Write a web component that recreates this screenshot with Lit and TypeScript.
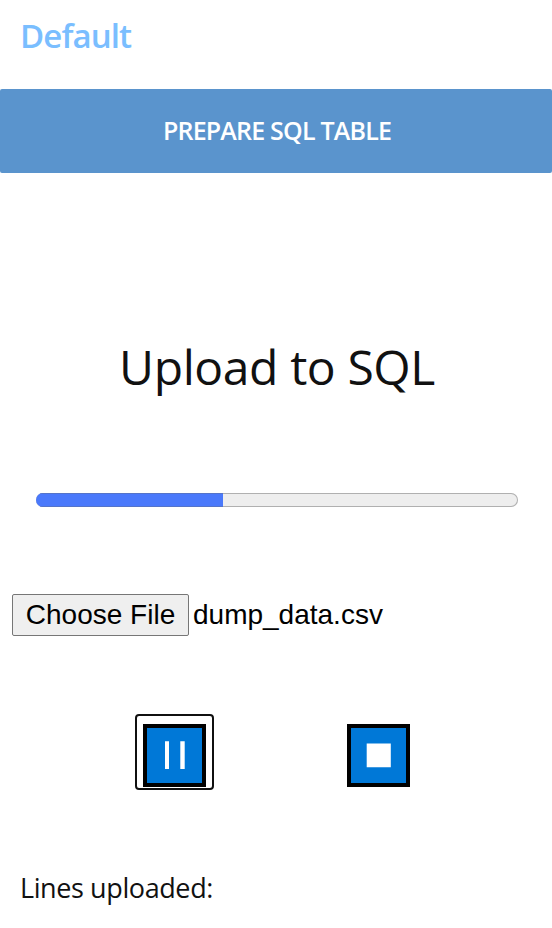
import { LitElement, html, css, svg } from "lit";
import { customElement, property } from "lit/decorators.js";

@customElement("media-icon")
class MediaIcon extends LitElement {
  @property() kind = "pause";

  static styles = css`
    :host { display: block; width: 63px; height: 63px; }
    svg { display: block; }
  `;

  render() {
    const glyph = this.kind === "pause"
      ? svg`<path d="M22 17.3h4v27.7h-4zM37.3 17.3h4.4v27.7h-4.4z" fill="#fff"/>`
      : svg`<path d="M19.7 19.5h24.1v23.8h-24.1z" fill="#fff"/>`;
    return html`<svg width="63" height="63" viewBox="0 0 63 63">
      <rect width="63" height="63" fill="#000" />
      <rect x="4" y="4" width="55" height="55" fill="#0078d7" />
      ${glyph}
    </svg>`;
  }
}

@customElement("app-root")
class AppRoot extends LitElement {
  @property({ type: Number }) progress = 38.8;

  static styles = css`
    :host {
      display: flex;
      flex-direction: column;
      height: 928px;
      overflow: hidden;
      background: #fff;
      color: #111;
      font-family: "Open Sans", "Noto Sans", sans-serif;
      white-space: nowrap;
    }
    .tab {
      height: 89px;
      box-sizing: border-box;
      padding: 12px 0 0 20px;
      font: 600 33px/48px "Open Sans", "Noto Sans", sans-serif;
      color: #7abeff;
    }
    .tab span { letter-spacing: -0.9px; }
    .prepare {
      height: 84px;
      flex: none;
      border: 0;
      border-radius: 2px;
      padding: 0 0 2px 2px;
      background: #5a94cd;
      color: #fff;
      font: 600 25px/82px "Open Sans", "Noto Sans", sans-serif;
    }
    .prepare span { letter-spacing: -0.8px; }
    h1 {
      margin: 159px 0 0;
      padding-left: 2px;
      text-align: center;
      font-size: 48px;
      font-weight: 400;
      line-height: 70px;
      letter-spacing: -0.4px;
    }
    .bar {
      margin: 91px 34px 0 36px;
      height: 14px;
      box-sizing: border-box;
      border-radius: 7px;
      background: #eee;
      box-shadow: inset 0 0 0 1px #b0b0b0;
      overflow: hidden;
    }
    .fill { height: 14px; background: #4a79fb; box-shadow: inset 0 -1px #5574c9, inset 0 1px #5574c9; }
    .file {
      display: flex;
      align-items: center;
      gap: 4px;
      margin: 87px 0 0 12px;
      color: #000;
      font: 28px/32px "Liberation Sans", Arial, sans-serif;
    }
    .choose {
      width: 177px;
      height: 42px;
      box-sizing: border-box;
      border: 1px solid #767676;
      border-radius: 2px;
      padding: 0;
      background: #efefef;
      color: #000;
      font: inherit;
    }
    .controls {
      display: flex;
      gap: 125px;
      margin: 78px 0 0 135px;
    }
    .control {
      display: flex;
      align-items: flex-start;
      width: 79px;
      height: 76px;
      box-sizing: border-box;
      border: 2px solid transparent;
      border-radius: 4px;
      padding: 8px 0 0 6px;
      background: none;
    }
    .focused { border-color: #101010; }
    .lines {
      margin: 78px 0 0 20px;
      font-size: 27px;
      line-height: 40px;
      letter-spacing: -0.4px;
    }
  `;

  render() {
    return html`
      <div class="tab"><span>Default</span></div>
      <button class="prepare"><span>PREPARE SQL TABLE</span></button>
      <h1><span>Upload to SQL</span></h1>
      <div class="bar"><div class="fill" style="width:${this.progress}%"></div></div>
      <div class="file">
        <button class="choose">Choose File</button>
        <span>dump_data.csv</span>
      </div>
      <div class="controls">
        <button class="control focused" aria-label="Pause"><media-icon kind="pause"></media-icon></button>
        <button class="control" aria-label="Stop"><media-icon kind="stop"></media-icon></button>
      </div>
      <div class="lines"><span>Lines uploaded:</span></div>
    `;
  }
}
